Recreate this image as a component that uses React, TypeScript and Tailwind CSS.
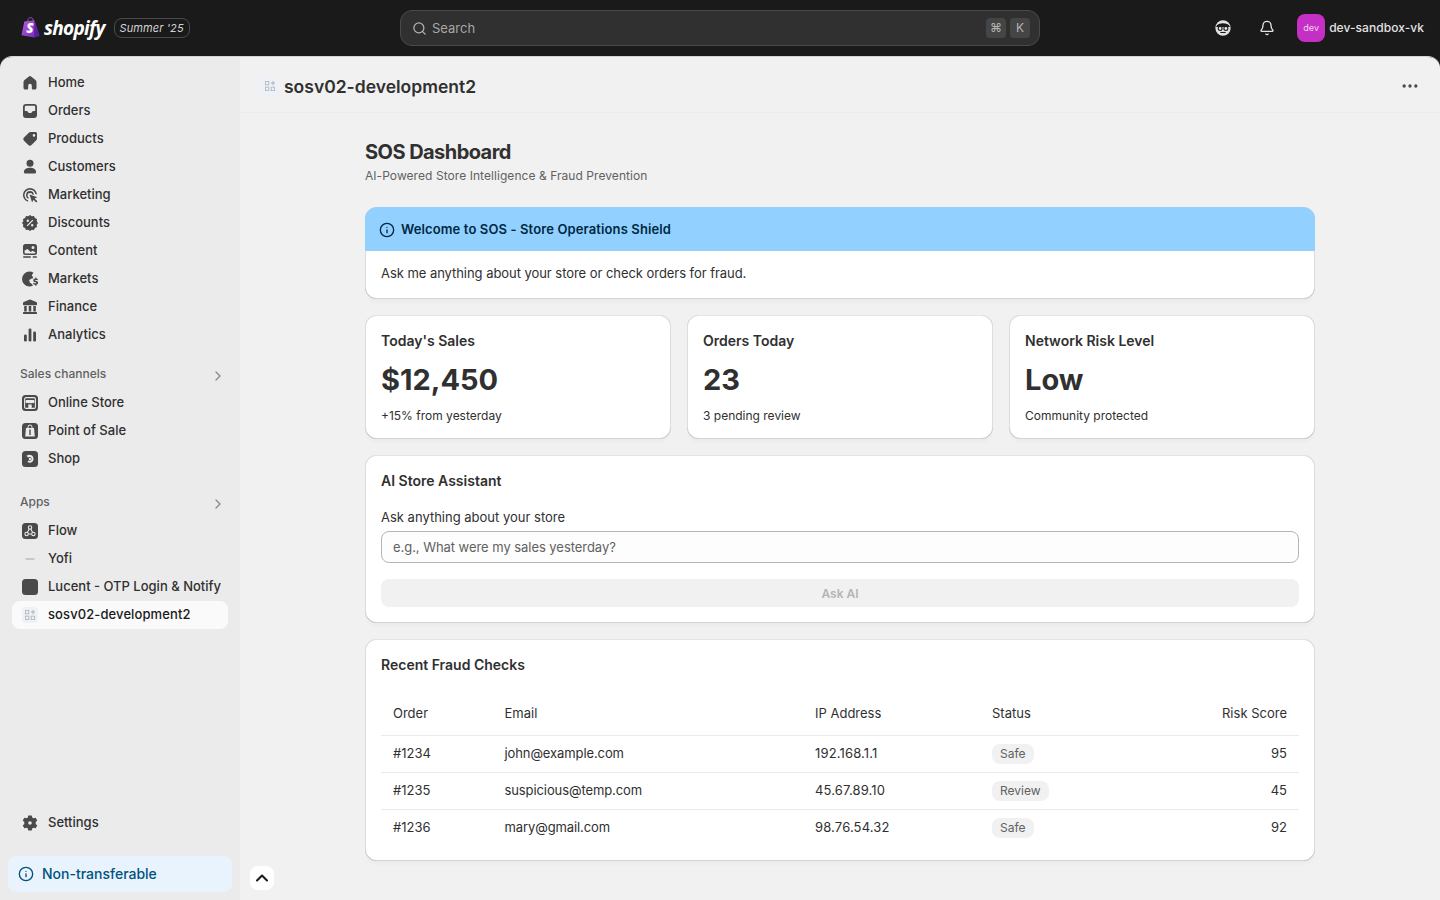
import type { ReactNode } from 'react';
import { Bell, ChevronRight, ChevronUp, Ellipsis, Info, Search } from 'lucide-react';

const cardShadow =
  'shadow-[0_5px_5px_-2.5px_rgba(0,0,0,0.03),inset_0_1px_0_0_rgba(204,204,204,0.5),inset_0_-1px_0_0_rgba(0,0,0,0.17),inset_-1px_0_0_0_rgba(0,0,0,0.13),inset_1px_0_0_0_rgba(0,0,0,0.13)]';

function Glyph({ children }: { children: ReactNode }) {
  return (
    <svg viewBox="0 0 20 20" className="w-5 h-5 shrink-0 text-[#4a4a4a]" fill="currentColor">
      {children}
    </svg>
  );
}

function AppTile({ children }: { children: ReactNode }) {
  return (
    <svg viewBox="0 0 20 20" className="w-5 h-5 shrink-0">
      <rect x="2" y="2" width="16" height="16" rx="3.500" fill="#4a4a4a" />
      {children}
    </svg>
  );
}

const HomeIcon = (
  <Glyph>
    <path d="M8.900 3.400a1.800 1.800 0 0 1 2.200 0l4.400 3.500c.6.500 1 1.200 1 2v6.100c0 .9-.7 1.500-1.500 1.500h-2.300a.9.9 0 0 1-.9-.9v-3.100a1.800 1.800 0 0 0-3.600 0v3.100a.9.9 0 0 1-.9.9H5c-.8 0-1.500-.6-1.500-1.500V8.900c0-.8.4-1.500 1-2z" />
  </Glyph>
);
const OrdersIcon = (
  <Glyph>
    <path
      fillRule="evenodd"
      d="M6 3h8a3 3 0 0 1 3 3v8a3 3 0 0 1-3 3H6a3 3 0 0 1-3-3V6a3 3 0 0 1 3-3ZM4.800 6v4h1.700c.8 0 1.200.4 1.500 1 .3.600.9 1 2 1s1.700-.4 2-1c.3-.6.7-1 1.500-1h1.700V6c0-.6-.5-1.200-1.200-1.200H6c-.7 0-1.200.6-1.200 1.200Z"
    />
  </Glyph>
);
const ProductsIcon = (
  <Glyph>
    <path
      fillRule="evenodd"
      d="M10.600 3h4.900c.8 0 1.500.7 1.500 1.500v4.900c0 .7-.3 1.300-.7 1.800l-4.800 4.800c-.9.900-2.300.9-3.200 0l-4.300-4.300c-.9-.9-.9-2.300 0-3.200l4.800-4.800c.5-.4 1.100-.7 1.800-.7Zm3.400 4.700a1.300 1.300 0 1 0 0-2.600 1.300 1.300 0 0 0 0 2.600Z"
    />
  </Glyph>
);
const CustomersIcon = (
  <Glyph>
    <circle cx="10" cy="6.300" r="3.500" />
    <path d="M10 10.800c-3.100 0-5.800 1.500-6.100 3.900-.1.900.5 1.800 1.500 1.800h9.200c1 0 1.600-.9 1.500-1.800-.3-2.400-3-3.900-6.100-3.900Z" />
  </Glyph>
);
const MarketingIcon = (
  <Glyph>
    <path d="M10 3a7 7 0 0 0-1.700 13.800l-.3-1.500A5.500 5.500 0 1 1 15.400 9l1.500.400A7 7 0 0 0 10 3Z" />
    <path d="M10 6a4 4 0 0 0-1.200 7.800l-.4-1.500a2.500 2.500 0 1 1 4-2.700l1.500.200A4 4 0 0 0 10 6Z" />
    <path d="m9.500 9.500 7.800 2.700-2.700 1.300 2.800 2.800-1.200 1.200-2.800-2.800-1.300 2.700Z" />
  </Glyph>
);
const DiscountsIcon = (
  <Glyph>
    <path
      fillRule="evenodd"
      d="M10 2l1.800 1.300 2.200-.3.900 2.100 2.100.9-.3 2.200L18 10l-1.300 1.800.3 2.200-2.100.9-.9 2.100-2.200-.3L10 18l-1.800-1.300-2.200.3-.9-2.100-2.100-.9.3-2.200L2 10l1.300-1.800L3 6l2.100-.9.9-2.100 2.200.3ZM12.400 6.700l-5.700 5.700.9.900 5.700-5.700ZM7.800 6.600a1.200 1.200 0 1 0 0 2.400 1.200 1.200 0 0 0 0-2.400Zm4.400 4.400a1.200 1.200 0 1 0 0 2.400 1.200 1.200 0 0 0 0-2.400Z"
    />
  </Glyph>
);
const ContentIcon = (
  <Glyph>
    <path
      fillRule="evenodd"
      d="M5.500 3h9A2.500 2.500 0 0 1 17 5.500v6a2.500 2.500 0 0 1-2.500 2.500h-9A2.500 2.500 0 0 1 3 11.500v-6A2.500 2.500 0 0 1 5.500 3Zm7.500 2a1.500 1.500 0 1 0 0 3 1.500 1.500 0 0 0 0-3ZM4.600 9.500v2c0 .5.400.9.900.9h9c.5 0 .9-.4.900-.9v-.3l-3-1.400-1.700 1.200-3.200-3Z"
    />
    <rect x="3" y="15.200" width="8" height="1.500" rx=".75" />
    <rect x="12.500" y="15.200" width="4.500" height="1.500" rx=".75" />
  </Glyph>
);
const MarketsIcon = (
  <Glyph>
    <path d="M9.500 2.500a7.500 7.500 0 0 0 0 15c1.300 0 2.500-.4 3.500-1l-1-1.600-2.200-1.400-.6-2.400 2.500-1.600 1.700-.2L11.800 6l1.700-2.300a7.500 7.500 0 0 0-4-1.200Z" />
    <path d="M15.300 8.500v1c-1.200.1-2 .9-2 1.900 0 2.200 3 1.400 3 2.500 0 .6-1.900.6-2.700-.1l-.5 1.200c.5.400 1.200.6 2.100.7v1h1.200v-1c1-.2 1.700-.9 1.700-1.900 0-2.200-3-1.500-3-2.500 0-.6 1.600-.5 2.300 0l.5-1.200a3 3 0 0 0-1.500-.5v-1.100Z" />
  </Glyph>
);
const FinanceIcon = (
  <Glyph>
    <path d="M9.200 2.700a2 2 0 0 1 1.600 0l5.500 2.300c.5.200.7.600.7 1v1.200c0 .6-.4 1-1 1H4c-.6 0-1-.4-1-1V6c0-.4.200-.8.700-1Z" />
    <rect x="4.200" y="9" width="2.500" height="5.500" />
    <rect x="8.750" y="9" width="2.500" height="5.500" />
    <rect x="13.300" y="9" width="2.500" height="5.500" />
    <rect x="3" y="15" width="14" height="2" rx=".6" />
  </Glyph>
);
const AnalyticsIcon = (
  <Glyph>
    <rect x="4" y="9.500" width="2.800" height="7" rx="1.200" />
    <rect x="8.600" y="3.500" width="2.800" height="13" rx="1.200" />
    <rect x="13.200" y="6.500" width="2.800" height="10" rx="1.200" />
  </Glyph>
);
const OnlineStoreIcon = (
  <AppTile>
    <rect x="4.600" y="4.600" width="10.800" height="10.800" rx="1.500" fill="none" stroke="#ebebeb" strokeWidth="1.100" />
    <path d="M6 7h8l.6 1.800a1.400 1.400 0 0 1-2.400.9 1.600 1.600 0 0 1-2.200 0 1.600 1.600 0 0 1-2.200 0 1.400 1.400 0 0 1-2.400-.9Z" fill="#ebebeb" />
    <rect x="8.300" y="11.500" width="3.400" height="3.500" fill="#ebebeb" />
  </AppTile>
);
const PosIcon = (
  <AppTile>
    <path d="M6 7h8l.8 8.500H5.200Z" fill="#ebebeb" />
    <path d="M8 7.500V6a2 2 0 0 1 4 0v1.500" fill="none" stroke="#ebebeb" strokeWidth="1" />
    <rect x="9.300" y="8.500" width="1.400" height="5.500" fill="#4a4a4a" />
  </AppTile>
);
const ShopIcon = (
  <AppTile>
    <path d="M6.500 6.800c2.300-1.800 7-1.300 7 3.200 0 3.200-3.500 4.700-6.100 2.900l1.100-1.500c1.100.8 3.100.3 3.100-1.400 0-2.200-2.300-2.500-3.600-1.400Z" fill="#ebebeb" />
    <circle cx="10" cy="10" r="1.200" fill="#ebebeb" />
  </AppTile>
);
const FlowIcon = (
  <AppTile>
    <g fill="none" stroke="#ebebeb" strokeWidth="1.100">
      <circle cx="10" cy="6.500" r="1.700" />
      <circle cx="6.600" cy="13" r="1.700" />
      <circle cx="13.400" cy="13" r="1.700" />
      <path d="M9.300 8 7.300 11.500M10.700 8l2 3.500M8.300 13h3.400" />
    </g>
  </AppTile>
);
const YofiIcon = (
  <svg viewBox="0 0 20 20" className="w-5 h-5 shrink-0">
    <rect x="5.500" y="9.500" width="9" height="1" fill="#a8a8a8" />
  </svg>
);
const LucentIcon = (
  <svg viewBox="0 0 20 20" className="w-5 h-5 shrink-0">
    <rect x="2" y="2" width="16" height="16" rx="3.500" fill="#4a4a4a" />
  </svg>
);

function SosIcon({ size }: { size: string }) {
  return (
    <div className={`${size} rounded-[4px] bg-[#eef1f5] flex items-center justify-center shrink-0`}>
      <svg viewBox="0 0 12 12" className="w-3 h-3 text-[#aab2bc]" fill="currentColor">
        <path fillRule="evenodd" d="M1 1h4.200v4.200H1Zm.8.8v2.600h2.600V1.800ZM1 6.800h4.200V11H1Zm.8.8v2.600h2.600V7.600ZM6.800 6.800H11V11H6.800Zm.8.800v2.600h2.600V7.600Z" />
        <path d="M8.500 1h1v1.600H11v1H9.500V5.200h-1V3.600H6.900v-1h1.600Z" />
      </svg>
    </div>
  );
}

const mainNav = [
  { label: 'Home', icon: HomeIcon },
  { label: 'Orders', icon: OrdersIcon },
  { label: 'Products', icon: ProductsIcon },
  { label: 'Customers', icon: CustomersIcon },
  { label: 'Marketing', icon: MarketingIcon },
  { label: 'Discounts', icon: DiscountsIcon },
  { label: 'Content', icon: ContentIcon },
  { label: 'Markets', icon: MarketsIcon },
  { label: 'Finance', icon: FinanceIcon },
  { label: 'Analytics', icon: AnalyticsIcon },
];

const channels = [
  { label: 'Online Store', icon: OnlineStoreIcon },
  { label: 'Point of Sale', icon: PosIcon },
  { label: 'Shop', icon: ShopIcon },
];

const apps = [
  { label: 'Flow', icon: FlowIcon },
  { label: 'Yofi', icon: YofiIcon },
  { label: 'Lucent - OTP Login & Notify', icon: LucentIcon },
];

const stats = [
  { title: "Today's Sales", value: '$12,450', note: '+15% from yesterday' },
  { title: 'Orders Today', value: '23', note: '3 pending review' },
  { title: 'Network Risk Level', value: 'Low', note: 'Community protected' },
];

const checks = [
  { order: '#1234', email: 'john@example.com', ip: '192.168.1.1', status: 'Safe', score: 95 },
  { order: '#1235', email: 'suspicious@temp.com', ip: '45.67.89.10', status: 'Review', score: 45 },
  { order: '#1236', email: 'mary@gmail.com', ip: '98.76.54.32', status: 'Safe', score: 92 },
];

function NavItem({ label, icon }: { label: string; icon: ReactNode }) {
  return (
    <div className="h-7 mx-3 pl-2 flex items-center gap-2 text-[13px] font-medium text-[#303030] whitespace-nowrap">
      {icon}
      <span>{label}</span>
    </div>
  );
}

function SectionLabel({ label, className }: { label: string; className: string }) {
  return (
    <div className={`${className} h-7 pl-5 pr-[14px] pb-[2px] flex items-center justify-between text-xs font-medium text-[#616161]`}>
      <span>{label}</span>
      <ChevronRight className="w-4 h-4 mt-1 text-[#8a8a8a]" />
    </div>
  );
}

function Sidebar() {
  return (
    <aside className="w-60 shrink-0 bg-[#ebebeb] pt-3 pb-2 flex flex-col">
      {mainNav.map((item) => (
        <NavItem key={item.label} {...item} />
      ))}

      <SectionLabel label="Sales channels" className="mt-3" />
      {channels.map((item) => (
        <NavItem key={item.label} {...item} />
      ))}

      <SectionLabel label="Apps" className="mt-4" />
      {apps.map((item) => (
        <NavItem key={item.label} {...item} />
      ))}
      <div className="h-7 mx-3 pl-2 flex items-center gap-2 rounded-lg bg-[#fafafa] text-[13px] font-medium tracking-[0.1px] text-[#1a1a1a]">
        <div className="w-5 h-5 flex items-center justify-center shrink-0">
          <SosIcon size="w-4 h-4" />
        </div>
        <span>sosv02-development2</span>
      </div>

      <div className="mt-auto">
        <NavItem
          label="Settings"
          icon={
            <Glyph>
              <path
                fillRule="evenodd"
                d="M8.300 2.500h3.400l.5 2.100 1.300.7 2.100-.6 1.700 2.900-1.600 1.500v1.800l1.600 1.500-1.700 2.900-2.100-.6-1.300.7-.5 2.100H8.300l-.5-2.100-1.300-.7-2.100.6-1.700-2.900 1.600-1.500V9.100L2.700 7.600l1.700-2.900 2.100.6 1.300-.7ZM10 8.200a1.800 1.800 0 1 0 0 3.600 1.800 1.800 0 0 0 0-3.600Z"
              />
            </Glyph>
          }
        />
        <div className="mt-[19px] mx-2 h-9 pl-[10px] flex items-center gap-2 rounded-lg bg-[#e8f3fd] text-sm font-medium text-[#00527c]">
          <Info className="w-4 h-4" strokeWidth={2} />
          <span>Non-transferable</span>
        </div>
      </div>
    </aside>
  );
}

function TopBar() {
  return (
    <header className="h-14 shrink-0 flex items-center relative">
      <div className="w-[400px] shrink-0 pl-[21px] flex items-center">
        <svg viewBox="0 0 20 22" className="w-[19px] h-[21px] shrink-0 -mt-[1px]">
          <defs>
            <linearGradient id="bag" x1="0" y1="0" x2="1" y2="1">
              <stop offset="0" stopColor="#c05ae0" />
              <stop offset="1" stopColor="#6a28b8" />
            </linearGradient>
          </defs>
          <path d="M7 4.500C7 2 8.700.6 10.200.6c1.700 0 2.800 1.500 2.800 3.900" fill="none" stroke="#9a58d0" strokeWidth="1" />
          <path d="M3.500 4.800 14 3.300l5.500 16.300L13.800 21.500 0.500 19.200Z" fill="url(#bag)" />
          <path d="M14 3.300l5.500 16.300-5.700 1.900Z" fill="#5a20a4" />
          <text x="5.500" y="17" fontSize="14" fontWeight="800" fontStyle="italic" fontFamily="Open Sans" fill="#fff">
            S
          </text>
        </svg>
        <span className="ml-[4px] text-[19px] leading-none font-bold italic tracking-[-0.7px] text-white font-['Open_Sans']">
          shopify
        </span>
        <span className="ml-[9px] h-5 px-[5px] flex items-center rounded-lg border border-[#4a4a4a] text-[11px] italic tracking-[0.1px] text-[#d4d4d4]">
          Summer '25
        </span>
      </div>

      <div className="w-[640px] h-9 shrink-0 pl-[11px] pr-[9px] flex items-center rounded-xl border border-[#4a4a4a] bg-[#303030]">
        <Search className="w-[15px] h-[15px] text-[#b5b5b5]" />
        <span className="ml-[5px] pt-px text-[13px] text-[#a6a6a6]">Search</span>
        <div className="ml-auto flex gap-1">
          <span className="w-5 h-5 flex items-center justify-center rounded bg-[#454545] text-xs text-[#b5b5b5]">⌘</span>
          <span className="w-5 h-5 flex items-center justify-center rounded bg-[#454545] text-xs text-[#b5b5b5]">K</span>
        </div>
      </div>

      <div className="flex-1 flex items-center justify-end pr-4">
        <svg viewBox="0 0 20 20" className="w-[18px] h-[18px] mr-[27px] shrink-0">
          <circle cx="10" cy="10" r="8.500" fill="#e3e3e3" />
          <path d="M2.500 8c2-4.500 13-4.500 15 0v1h-15Z" fill="#1a1a1a" />
          <circle cx="6.800" cy="10.500" r="2.200" fill="#e3e3e3" stroke="#1a1a1a" strokeWidth="1.200" />
          <circle cx="13.200" cy="10.500" r="2.200" fill="#e3e3e3" stroke="#1a1a1a" strokeWidth="1.200" />
          <path d="M7 15h6" stroke="#1a1a1a" strokeWidth="1.200" />
        </svg>
        <Bell className="w-4 h-4 mr-[22px] text-[#e3e3e3]" />
        <div className="w-7 h-7 flex items-center justify-center rounded-lg bg-[#c42fc4] text-[9px] text-[#f5d5f5]">dev</div>
        <span className="ml-1 text-xs font-medium tracking-[0.05px] text-[#e3e3e3]">dev-sandbox-vk</span>
      </div>
    </header>
  );
}

function Card({ children, className = '' }: { children: ReactNode; className?: string }) {
  return <section className={`bg-white rounded-xl ${cardShadow} ${className}`}>{children}</section>;
}

function Dashboard() {
  return (
    <div className="w-[950px] mx-auto">
      <h1 className="text-xl leading-6 font-bold tracking-[-0.55px] text-[#303030] mt-[27px]">SOS Dashboard</h1>
      <p className="mt-1 text-xs leading-4 tracking-[0.06px] text-[#616161]">AI-Powered Store Intelligence &amp; Fraud Prevention</p>

      <Card className="mt-[23px] overflow-hidden">
        <div className="h-11 pl-[14px] pt-px flex items-center gap-[6px] bg-[#91d0ff] text-[13px] font-semibold tracking-[0.12px] text-[#00283f]">
          <Info className="w-4 h-4" />
          <span>Welcome to SOS - Store Operations Shield</span>
        </div>
        <p className="h-12 px-4 pb-[3px] flex items-center text-[13px] tracking-[-0.05px] text-[#303030]">
          Ask me anything about your store or check orders for fraud.
        </p>
      </Card>

      <div className="mt-4 grid grid-cols-3 gap-4">
        {stats.map((stat) => (
          <Card key={stat.title} className="h-[124px] px-4 pt-4">
            <h2 className="text-sm leading-5 font-semibold text-[#303030]">{stat.title}</h2>
            <div className="mt-[9px] text-[29px] leading-10 font-bold text-[#303030]">{stat.value}</div>
            <p className="mt-2 text-xs leading-4 text-[#303030]">{stat.note}</p>
          </Card>
        ))}
      </div>

      <Card className="mt-4 h-[168px] px-4 pt-4">
        <h2 className="text-sm leading-5 font-semibold text-[#303030]">AI Store Assistant</h2>
        <label className="block mt-[18px] text-[13px] leading-4 text-[#303030]">Ask anything about your store</label>
        <div className="mt-[6px] h-8 pl-[11px] pt-px flex items-center rounded-lg border border-[#b5b5b5] bg-[#fdfdfd] text-[13px] tracking-[-0.05px] text-[#616161]">
          e.g., What were my sales yesterday?
        </div>
        <div className="mt-4 h-7 pt-px flex items-center justify-center rounded-lg bg-[#f1f1f1] text-xs font-semibold text-[#b5b5b5]">Ask AI</div>
      </Card>

      <Card className="mt-4 h-[222px] px-4 pt-4">
        <h2 className="text-sm leading-5 font-semibold text-[#303030]">Recent Fraud Checks</h2>
        <table className="mt-[17px] w-full table-fixed text-[13px] text-[#303030]">
          <colgroup>
            <col className="w-[123.5px]" />
            <col className="w-[310.5px]" />
            <col className="w-[177px]" />
            <col />
            <col />
          </colgroup>
          <thead>
            <tr className="h-[43px] border-b border-[#ebebeb]">
              <th className="pl-3 text-left font-normal">Order</th>
              <th className="text-left font-normal">Email</th>
              <th className="text-left font-normal">IP Address</th>
              <th className="text-left font-normal">Status</th>
              <th className="pr-3 text-right font-normal">Risk Score</th>
            </tr>
          </thead>
          <tbody>
            {checks.map((check, index) => (
              <tr key={check.order} className={`h-[37px] ${index < checks.length - 1 ? 'border-b border-[#ebebeb]' : ''}`}>
                <td className="pl-3">{check.order}</td>
                <td className="tracking-[-0.1px]">{check.email}</td>
                <td className="tracking-[0.15px]">{check.ip}</td>
                <td>
                  <span className="inline-flex h-5 items-center px-2 rounded-lg bg-[#f1f1f1] text-xs text-[#616161]">{check.status}</span>
                </td>
                <td className="pr-3 text-right">{check.score}</td>
              </tr>
            ))}
          </tbody>
        </table>
      </Card>
    </div>
  );
}

export default function App() {
  return (
    <div className="h-[900px] overflow-hidden bg-[#1a1a1a] flex flex-col font-['Inter',sans-serif]">
      <TopBar />
      <div className="flex-1 min-h-0 flex rounded-t-xl overflow-hidden border-t border-[#d4d4d4] relative">
        <Sidebar />
        <main className="flex-1 bg-[#f1f1f1] flex flex-col">
          <div className="h-14 shrink-0 pl-5 pr-5 pt-[3px] flex items-center gap-[4px] border-b border-[#ebebeb]">
            <SosIcon size="w-5 h-5" />
            <span className="pt-[3px] text-[17.5px] font-semibold text-[#303030]">sosv02-development2</span>
            <Ellipsis className="ml-auto w-5 h-5 text-[#4a4a4a]" />
          </div>
          <Dashboard />
        </main>
        <button className="absolute left-[250px] bottom-[10px] w-6 h-6 flex items-center justify-center rounded-lg bg-white text-[#1a1a1a]">
          <ChevronUp className="w-5 h-5" strokeWidth={2.5} />
        </button>
      </div>
    </div>
  );
}
